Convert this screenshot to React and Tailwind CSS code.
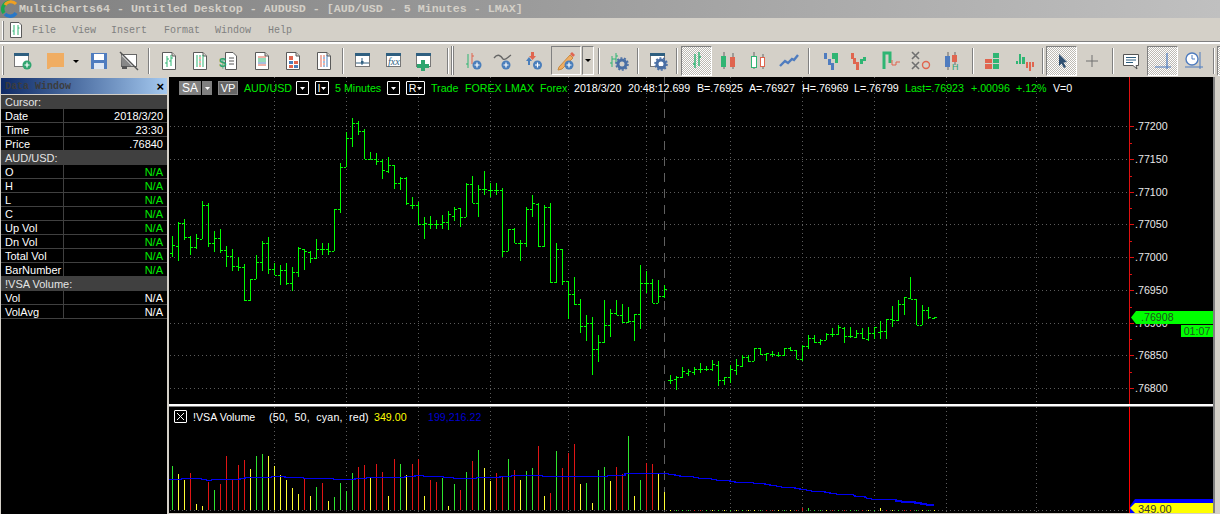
import React from "react";

const seg1 = [[408,470,460,436],[366,482,438,368],[358,420,368,412],[408,464,412,442],[402,448,442,415],[304,418,418,316],[310,442,316,428],[394,456,430,415],[388,460,415,450],[438,500,450,469],[448,512,469,498],[470,512,498,502],[492,602,502,601],[538,602,601,538],[466,538,538,487],[424,512,487,430],[412,522,430,506],[490,526,506,526],[496,554,526,511],[488,556,511,550],[502,572,550,516],[442,532,516,445],[446,510,448,454],[454,488,456,475],[418,476,475,448],[430,464,448,448],[430,464,448,452],[326,454,452,327],[188,338,327,202],[96,202,202,115],[54,140,115,68],[64,106,68,93],[88,178,93,178],[156,178,178,178],[160,196,178,184],[176,236,184,210],[172,218,212,194],[194,268,194,250],[230,270,250,234],[230,316,234,310],[292,326,314,316],[306,374,316,373],[352,416,373,370],[348,386,372,373],[360,386,373,373],[346,386,373,367],[334,390,367,343],[322,362,347,327],[324,380,325,350],[250,352,350,253]];
const seg2 = [[48,130,73,130],[76,170,130,88],[34,104,88,88],[70,112,91,91],[70,104,91,91],[85,290,91,274],[208,274,274,208],[205,250,208,250],[240,302,250,250],[142,260,250,148],[106,170,148,130],[130,262,132,257],[136,260,257,142],[130,370,142,366],[250,368,365,268],[268,374,268,364],[362,476,364,403],[352,434,403,431],[418,520,433,499],[466,544,499,490],[472,644,490,568],[526,606,568,545],[420,548,545,496],[448,532,496,460],[420,466,460,466],[432,490,466,487],[442,488,487,484],[463,542,484,463],[316,506,463,370],[334,400,370,370],[358,430,370,428],[360,430,428,409],[376,414,409,388],[646,672,661,661],[648,690,658,650],[622,654,650,634],[628,648,640,634],[622,646,636,628],[610,640,628,628],[618,634,628,628],[600,632,628,612],[604,678,616,661],[650,674,661,652],[614,668,652,628],[598,644,630,616],[586,622,618,590],[584,606,590,604],[565,604,604,565],[565,584,565,582],[578,602,582,578]];
const seg3 = [[274,290,282,282],[276,290,286,286],[264,288,286,264],[262,272,264,270],[270,298,270,296],[256,304,296,258],[226,268,258,234],[226,248,234,246],[236,256,246,240],[218,240,240,222],[204,232,222,222],[196,224,222,200],[202,248,204,228],[200,234,228,228],[210,234,230,218],[204,238,218,234],[202,242,236,218],[200,236,218,202],[182,238,216,214],[176,238,214,176],[138,200,176,180],[120,184,180,132],[112,166,132,112],[52,118,114,118],[118,196,118,194],[134,196,194,150],[142,178,150,172],[171,176,174,172]];
const bars = [
  ...seg1.map((b) => b.map((v) => 100 + v / 3)),
  ...seg2.map((b) => b.map((v) => 160 + v / 3)),
  ...seg3.map((b) => b.map((v) => 260 + v / 3)),
].map((b, i) => ({ x: 172 + i * 6, t: Math.round(b[0]), b: Math.round(b[1]), l: Math.round(b[2]), r: Math.round(b[3]) }));

const G = "#2ee62e", R = "#e01515", Y = "#ffff33";
const vol1 = [[198,G],[222,Y],[240,Y],[219,R],[312,Y],[318,Y],[246,R],[270,G],[252,R],[168,R],[240,R],[195,R],[180,R],[207,Y],[168,G],[162,G],[168,Y],[198,Y],[225,Y],[240,Y],[264,Y],[282,Y],[237,R],[288,Y],[261,G],[249,R],[303,Y],[291,G],[249,G],[273,G],[219,G],[201,R],[195,R],[234,Y],[192,R],[216,R],[288,Y],[177,R],[192,G],[225,Y],[192,R],[177,R],[288,Y],[240,R],[246,R],[234,G],[318,Y],[252,G],[270,R],[216,G],[183,R],[150,G],[204,Y],[243,Y],[219,R],[231,R],[177,G],[210,R],[240,Y],
[213,G],[204,G],[138,R],[288,Y],[279,R],[153,G],[204,R],[159,R],[132,R],[252,Y],[249,G],[309,Y],[210,G],[201,G],[243,Y],[201,R],[222,R],[108,G],[288,Y],[240,G],[189,R],[192,R],[222,Y],[276,Y]];
const tailColors = [Y,G,G,G,R,R,G,Y,G,Y,G,Y,G,Y,Y,G,R,R,Y,G,Y,R,R,G,G,G,Y,R,G,R,G,G,R,Y,G,Y,R,Y,G,R,R,G,Y,G,Y];

const blue1 = [[10,238],[50,236],[110,238],[125,241],[140,238],[225,235],[240,232],[320,229],[360,232],[415,235],[505,238],[570,235],[605,232],[720,229],[750,226],[775,229],[835,232],[865,235],[935,232],[1005,229],[1040,226]];
const blue2 = [[52,229],[248,226],[300,220],[430,223],[450,226],[465,229],[505,232],[520,235],[560,238],[575,241],[615,244],[630,247],[685,250],[720,253],[735,256],[755,259],[770,262],[810,265],[825,268],[845,271],[860,274],[900,277],[915,280],[935,283],[985,286],[990,289],[1020,292],[1025,295],[1040,298]];
const blue3 = [[33,303],[50,306],[90,309],[108,312],[125,315]];
const steps = [
  ...blue1.map(([x, y]) => [165 + x / 3, 400 + y / 3]),
  ...blue2.map(([x, y]) => [525 + x / 3, 400 + y / 3]),
  ...blue3.map(([x, y]) => [885 + x / 3, 400 + y / 3]),
];
let bluePts = "";
steps.forEach(([x, y], i) => { if (i) bluePts += ` ${x.toFixed(1)},${steps[i - 1][1].toFixed(1)}`; bluePts += ` ${x.toFixed(1)},${y.toFixed(1)}`; });
bluePts += ` 934,${steps[steps.length - 1][1].toFixed(1)}`;

const hGrid = [126, 159, 192, 224, 257, 290, 323, 355, 388];
const vGrid = [274, 346, 418, 490, 568, 646, 730, 802, 874, 946, 1036];
const labels = [".77200", ".77150", ".77100", ".77050", ".77000", ".76950", ".76900", ".76850", ".76800"];

const Ic = ({ className = "", w = 20, children }) => (
  <svg width={w} height="20" viewBox={`0 0 ${w} 20`} className={`shrink-0 ${className}`}>{children}</svg>
);
const Plus = ({ cx = 14, cy = 14, c = "#4a7ebb" }) => (
  <g><circle cx={cx} cy={cy} r="4.5" fill={c} /><path d={`M${cx - 2.5} ${cy}h5M${cx} ${cy - 2.5}v5`} stroke="#fff" strokeWidth="1.2" /></g>
);
const Gear = ({ cx = 13, cy = 13 }) => (
  <g><circle cx={cx} cy={cy} r="4" fill="none" stroke="#4a6fa5" strokeWidth="3" /><circle cx={cx} cy={cy} r="6" fill="none" stroke="#4a6fa5" strokeWidth="1.6" strokeDasharray="2 1.7" /></g>
);
const Doc = ({ className, children }) => (
  <Ic className={className}>
    <path d="M3.5 1.5H13L16.5 5V18.5H3.5Z" fill="#fff" stroke="#5a5a5a" />
    <path d="M13 1.5V5H16.5" fill="#d4d0c8" stroke="#5a5a5a" />
    {children}
  </Ic>
);
const Win = ({ children }) => (
  <g><rect x="2.5" y="2.5" width="14" height="13" fill="#fff" stroke="#777" /><rect x="2" y="2" width="15" height="3" fill="#2f5f80" />{children}</g>
);
const Sep = ({ className }) => <div className={`w-[2px] h-[26px] shrink-0 bg-[#808080] border-r border-white ${className}`} />;
const Bar2 = ({ x, t, b, l, r, c = "#2fb573" }) => (
  <path d={`M${x} ${t}V${b}M${x - 2} ${l}h2M${x} ${r}h2`} stroke={c} fill="none" />
);
const Table = ({ a, b, c }) => (
  <g>{[5, 7, 9, 11, 13, 15].map((y, i) => (
    <g key={y}><path d={`M6 ${y}h2`} stroke={a} /><path d={`M9 ${y}h2`} stroke={i % 2 ? b : a} /><path d={`M12 ${y}h2`} stroke={c} /></g>
  ))}</g>
);
const checker = "bg-[repeating-conic-gradient(#ffffff_0_25%,#bdbab3_0_50%)] bg-[length:2px_2px]";

function Toolbar() {
  return (
    <div className="h-[35px] flex items-center pl-[2px] overflow-hidden shrink-0 bg-[#d4d0c8] border-t-2 border-white">
      <div className="w-[2px] h-[29px] shrink-0 bg-white border-r border-[#808080]" />
      <Ic className="ml-[8px]"><Win /><Plus cx={15} cy={14} c="#2fa56f" /></Ic>
      <Ic className="ml-[13px]"><path d="M2 2H19V16H6L4 18H2Z" fill="#f0ad63" /></Ic>
      <svg width="8" height="20" viewBox="0 0 8 20" className="ml-[7px] shrink-0"><path d="M1 9H7L4 12Z" fill="#000" /></svg>
      <Ic className="ml-[9px]"><rect x="2" y="2" width="16" height="16" fill="#4f7cbf" /><rect x="5" y="3" width="10" height="6" fill="#fff" /><rect x="5" y="12" width="10" height="6" fill="#dfe7f3" /></Ic>
      <Ic className="ml-[10px]"><rect x="2.5" y="3.5" width="15" height="12" fill="#fff" stroke="#666" /><path d="M3 15h5v3H3Z" fill="#555" /><path d="M1 1L19 19" stroke="#555" strokeWidth="1.5" /><path d="M2 4l11 11H3Z" fill="#888" /></Ic>
      <Sep className="ml-[9px]" />
      <Doc className="ml-[9px]"><Bar2 x={8} t={5} b={16} l={12} r={8} /><Bar2 x={12} t={4} b={15} l={10} r={7} /></Doc>
      <Doc className="ml-[11px]"><Table a="#2fb573" b="#e0654f" c="#2fb573" /></Doc>
      <Ic className="ml-[9px]">
        <path d="M6.5 1.5H14L17.5 5V18.5H6.5Z" fill="#fff" stroke="#5a5a5a" />
        <path d="M10 7h5M10 10h5M10 13h5" stroke="#555" />
        <text x="0" y="16" fontSize="13" fontWeight="700" fontFamily="Liberation Sans" fill="#2fa56f">$</text>
      </Ic>
      <Doc className="ml-[13px]"><path d="M6 6h8" stroke="#e0654f" /><path d="M6 8h8M6 10h8" stroke="#2fb573" /><path d="M6 12h8" stroke="#4a7ebb" /><path d="M6 14h8" stroke="#e0654f" /></Doc>
      <Doc className="ml-[11px]"><rect x="6" y="5" width="4" height="4" fill="#e0654f" /><rect x="6" y="10" width="4" height="3" fill="#4a7ebb" /><rect x="11" y="10" width="4" height="3" fill="#e0654f" /><rect x="6" y="14" width="4" height="3" fill="#e0654f" /><rect x="11" y="14" width="4" height="3" fill="#4a7ebb" /></Doc>
      <Doc className="ml-[11px]"><Table a="#e0654f" b="#4a7ebb" c="#4a7ebb" /></Doc>
      <Sep className="ml-[8px]" />
      <Ic className="ml-[9px]"><Win /><path d="M3 12h13M9 7v7" stroke="#2f5f80" /><rect x="8" y="10" width="2.5" height="2.5" fill="#2f5f80" /></Ic>
      <Ic className="ml-[11px]"><Win /><text x="4" y="14" fontSize="10" fontStyle="italic" fontFamily="Liberation Serif" fill="#2f5f80">fxx</text></Ic>
      <Ic className="ml-[10px]"><Win /><path d="M3 13h4v-4h4v4h4v4h-4v3H7v-3H3Z" fill="#2fa56f" /></Ic>
      <Sep className="ml-[13px]" />
      <div className="ml-[2px] w-[3px] h-[29px] shrink-0 bg-white border-x border-[#808080]" />
      <Ic className="ml-[9px]"><path d="M5 3V17M3 13h2" stroke="#2fb573" fill="none" /><path d="M9 2V13M9 5h2" stroke="#e0654f" fill="none" /><Plus /></Ic>
      <Ic className="ml-[10px]"><path d="M1 7C5 2 8 5 10 8C12 10 15 6 18 4" stroke="#666" strokeWidth="1.4" fill="none" /><Plus cx={13} /></Ic>
      <Ic className="ml-[10px]"><path d="M3 10L6 6L9 10H7V14H5V10Z" fill="#4a7ebb" /><path d="M8 1h3v4h2L9.5 9L6 5h2Z" fill="#e0654f" /><Plus cx={14.5} /></Ic>
      <div className="ml-[8px] w-[30px] h-[29px] shrink-0 flex items-center justify-center border border-t-[#808080] border-l-[#808080] border-r-white border-b-white">
        <Ic><path d="M3 16L14 4L17 7L6 18L2 19Z" fill="#f0ad63" stroke="#c98a3f" /><path d="M14 3L16 1L19 4L17 6Z" fill="#e0654f" /><Plus cx={13} cy={14} /></Ic>
      </div>
      <div className="ml-[1px] w-[12px] h-[29px] shrink-0 flex items-center justify-center border border-t-[#808080] border-l-[#808080] border-r-white border-b-white">
        <svg width="6" height="4"><path d="M0 0H6L3 3Z" fill="#000" /></svg>
      </div>
      <Sep className="ml-[4px]" />
      <Ic className="ml-[9px]"><Bar2 x={3} t={5} b={16} l={12} r={8} /><Bar2 x={7} t={2} b={12} l={8} r={5} /><Gear cx={13} cy={13} /></Ic>
      <Sep className="ml-[8px]" />
      <Ic className="ml-[9px]"><Win /><Gear cx={13} cy={13} /></Ic>
      <Sep className="ml-[8px]" />
      <div className={`ml-[3px] w-[31px] h-[30px] shrink-0 flex items-center justify-center border border-t-[#808080] border-l-[#808080] border-r-white border-b-white ${checker}`}>
        <Ic><path d="M8 3V17M6 13h2" stroke="#2fb573" strokeWidth="1.4" fill="none" /><path d="M12 1V15M12 6h2" stroke="#2fb573" strokeWidth="1.4" fill="none" /></Ic>
      </div>
      <Ic className="ml-[6px]"><path d="M6 1V18M15 2V18" stroke="#666" /><rect x="3" y="5" width="5" height="11" fill="#2fb573" /><rect x="12" y="6" width="5" height="10" fill="#e0654f" /></Ic>
      <Ic className="ml-[10px]"><path d="M6 1V18M15 3V18" stroke="#666" /><rect x="3.5" y="5.5" width="5" height="11" fill="#fff" stroke="#2fb573" /><rect x="12.5" y="6.5" width="4" height="9" fill="#fff" stroke="#e0654f" /></Ic>
      <Ic className="ml-[11px]"><path d="M1 15L6 10L9 12L13 8L15 9L19 4" stroke="#4f7cbf" strokeWidth="2.4" fill="none" /></Ic>
      <Sep className="ml-[9px]" />
      <Ic className="ml-[10px]"><path d="M4 2h3v6H4ZM8 8h3v6H8ZM11 12h3v7h-3Z" fill="#4f7cbf" /><path d="M12 2h3v6h-3ZM15 2h3v10h-3Z" fill="#2fb573" /></Ic>
      <Ic className="ml-[8px]"><path d="M3 2h3v6H3ZM5 7h3v6H5ZM8 11h3v8H8Z" fill="#e0654f" /><path d="M12 8h3v5h-3ZM15 6h3v4h-3Z" fill="#2fb573" /></Ic>
      <Ic className="ml-[13px]"><path d="M3 18V2H9V12" stroke="#2fb573" strokeWidth="3" fill="none" /><path d="M11 9V14H15V11H19" stroke="#e0654f" fill="none" /></Ic>
      <Ic className="ml-[10px]"><path d="M1 1L8 8M8 1L1 8M1 11L8 18M8 11L1 18" stroke="#707070" strokeWidth="1.6" /><circle cx="15" cy="14" r="3.5" fill="none" stroke="#e0654f" strokeWidth="1.4" /></Ic>
      <Ic className="ml-[11px]"><path d="M6 1V19M13 1V14" stroke="#666" /><rect x="3" y="5" width="5" height="11" fill="#4f7cbf" /><rect x="10" y="4" width="5" height="7" fill="#e0654f" /><text x="10" y="19" fontSize="9" fontFamily="Liberation Sans" fill="#2fa56f">H</text></Ic>
      <Sep className="ml-[10px]" />
      <Ic className="ml-[8px]"><path d="M3 8h7v4H3ZM3 13h7v5H3Z" fill="#e0654f" /><path d="M11 2h6v5h-6ZM11 8h6v4h-6ZM11 13h6v5h-6Z" fill="#2fb573" /></Ic>
      <Ic className="ml-[12px]"><rect x="2" y="10" width="2" height="3" fill="#2fb573" /><rect x="5" y="3" width="2" height="10" fill="#2fb573" /><rect x="8" y="6" width="3" height="7" fill="#2fb573" /><rect x="12" y="11" width="2" height="6" fill="#e0654f" /><rect x="15" y="11" width="2" height="9" fill="#e0654f" /><rect x="18" y="11" width="2" height="5" fill="#e0654f" /></Ic>
      <Sep className="ml-[8px]" />
      <div className={`ml-[2px] w-[31px] h-[30px] shrink-0 flex items-center justify-center border border-t-[#808080] border-l-[#808080] border-r-white border-b-white ${checker}`}>
        <Ic><path d="M7 3L15 11L11.5 11.5L14 16L12 17L9.5 12.5L7 15Z" fill="#2f4f70" /></Ic>
      </div>
      <Ic className="ml-[5px]"><path d="M10 4V16M4 10H16" stroke="#707070" /></Ic>
      <Sep className="ml-[10px]" />
      <Ic className="ml-[7px]"><path d="M2.5 3.5H17.5V14.5H15L16 18L12 14.5H2.5Z" fill="#fff" stroke="#555" /><path d="M5 6.5h10M5 9h10M5 11.5h7" stroke="#2f5f80" /></Ic>
      <div className={`ml-[6px] w-[31px] h-[30px] shrink-0 flex items-center justify-center border border-t-[#808080] border-l-[#808080] border-r-white border-b-white ${checker}`}>
        <Ic><path d="M14 2V18M2 16H18" stroke="#4f7cbf" strokeWidth="1.2" /></Ic>
      </div>
      <Ic className="ml-[6px]"><circle cx="8" cy="8" r="6" fill="#fff" stroke="#4f7cbf" strokeWidth="1.4" /><path d="M8 4V8H11" stroke="#4f7cbf" fill="none" /><path d="M16 1V18M1 16H19" stroke="#4f7cbf" /></Ic>
      <Sep className="ml-[9px]" />
      <div className={`ml-[2px] w-[31px] h-[30px] shrink-0 border border-t-[#808080] border-l-[#808080] border-r-white border-b-white ${checker}`} />
    </div>
  );
}

const DataHead = ({ children }) => (
  <div className="h-[14px] bg-[#404040] text-[#e4e4e4] pl-[4px] leading-[15px] border-b border-[#404040]">{children}</div>
);
const DataRow = ({ k, v, green }) => (
  <div className="h-[14px] flex border-b border-[#404040] leading-[15px]">
    <div className="w-[63px] pl-[4px] border-r border-[#404040] text-white whitespace-nowrap">{k}</div>
    <div className={`flex-1 text-right pr-[4px] ${green ? "text-[#00ee00]" : "text-white"}`}>{v}</div>
  </div>
);

function DataWindow() {
  return (
    <div className="w-[167px] shrink-0 flex flex-col pl-[1px] bg-[#d4d0c8]">
      <div className="h-[16px] mt-[1px] flex items-center justify-between pl-[4px] pr-[3px] bg-gradient-to-r from-[#0f2a66] to-[#a6caf0]">
        <span className="font-['Liberation_Mono'] text-[10px] font-bold text-[#3c3c3c]">Data Window</span>
        <span className="text-black font-bold text-[13px] leading-none">×</span>
      </div>
      <div className="flex-1 mt-[1px] bg-black text-[11px]">
        <DataHead>Cursor:</DataHead>
        <DataRow k="Date" v="2018/3/20" />
        <DataRow k="Time" v="23:30" />
        <DataRow k="Price" v=".76840" />
        <DataHead>AUD/USD:</DataHead>
        <DataRow k="O" v="N/A" green />
        <DataRow k="H" v="N/A" green />
        <DataRow k="L" v="N/A" green />
        <DataRow k="C" v="N/A" green />
        <DataRow k="Up Vol" v="N/A" green />
        <DataRow k="Dn Vol" v="N/A" green />
        <DataRow k="Total Vol" v="N/A" green />
        <DataRow k="BarNumber" v="N/A" green />
        <DataHead>!VSA Volume:</DataHead>
        <DataRow k="Vol" v="N/A" />
        <DataRow k="VolAvg" v="N/A" />
      </div>
    </div>
  );
}

const Drop = ({ label = "", className = "" }) => (
  <div className={`h-[14px] shrink-0 flex items-center justify-center gap-[1px] border border-white rounded-[1px] text-white leading-none ${className}`}>
    {label}
    <svg width="5" height="3"><path d="M0 0H5L2.5 3Z" fill="#fff" /></svg>
  </div>
);

function ChartHeader() {
  const T = "shrink-0 whitespace-nowrap";
  return (
    <div className="absolute left-0 top-[4px] flex items-center text-[10.67px] h-[14px] pl-[10px] text-[#00ee00]">
      <div className="w-[22px] h-[14px] shrink-0 bg-[#808080] text-white text-center leading-[14px] text-[12px]">SA</div>
      <div className="ml-[1px] w-[10px] h-[14px] shrink-0 bg-[#808080] flex items-center justify-center"><svg width="5" height="3"><path d="M0 0H5L2.5 3Z" fill="#fff" /></svg></div>
      <div className="ml-[6px] w-[20px] h-[14px] shrink-0 bg-[#666] text-white text-center leading-[13px] text-[11px] border border-[#888]">VP</div>
      <span className={`ml-[6px] w-[52px] ${T}`}>AUD/USD</span>
      <Drop className="w-[13px]" />
      <Drop className="ml-[6px] w-[14px]" label="I" />
      <span className={`ml-[6px] w-[52px] ${T}`}>5 Minutes</span>
      <Drop className="w-[13px]" />
      <Drop className="ml-[6px] w-[19px]" label="R" />
      <span className={`ml-[6px] w-[34px] ${T}`}>Trade</span>
      <span className={`w-[40px] ${T}`}>FOREX</span>
      <span className={`w-[35px] ${T}`}>LMAX</span>
      <span className={`w-[34px] ${T}`}>Forex</span>
      <span className={`w-[54px] text-white ${T}`}>2018/3/20</span>
      <span className={`w-[69px] text-white ${T}`}>20:48:12.699</span>
      <span className={`w-[52px] text-white ${T}`}>B=.76925</span>
      <span className={`w-[53px] text-white ${T}`}>A=.76927</span>
      <span className={`w-[52px] text-white ${T}`}>H=.76969</span>
      <span className={`w-[51px] text-white ${T}`}>L=.76799</span>
      <span className={`w-[66px] ${T}`}>Last=.76923</span>
      <span className={`w-[45px] ${T}`}>+.00096</span>
      <span className={`w-[37px] ${T}`}>+.12%</span>
      <span className={`text-white ${T}`}>V=0</span>
    </div>
  );
}

function PricePane() {
  return (
    <div className="relative h-[327px] shrink-0 bg-black overflow-hidden">
      <svg width="1044" height="327" viewBox="169 77 1044 327" className="block" shapeRendering="crispEdges">
        {hGrid.map((y) => <line key={y} x1="170" x2="1129" y1={y + 0.5} y2={y + 0.5} stroke="#5c5c5c" strokeDasharray="1 3" />)}
        {vGrid.map((x) => <line key={x} x1={x + 0.5} x2={x + 0.5} y1="77" y2="404" stroke="#5c5c5c" strokeDasharray="1 3" />)}
        <line x1="664.5" x2="664.5" y1="77" y2="404" stroke="#606060" strokeDasharray="9 7" />
        {bars.map((b) => (
          <path key={b.x} d={`M${b.x + 0.5} ${b.t}V${b.b}M${b.x - 2} ${b.l + 0.5}H${b.x}M${b.x + 1} ${b.r + 0.5}H${b.x + 3}`} stroke="#00ff00" fill="none" />
        ))}
        <line x1="1129.5" x2="1129.5" y1="77" y2="404" stroke="#e01010" />
        {hGrid.map((y) => <line key={y} x1="1129" x2="1134" y1={y + 0.5} y2={y + 0.5} stroke="#e01010" />)}
        {hGrid.slice(0, -1).map((y, i) => <line key={y} x1="1129" x2="1132" y1={Math.round((y + hGrid[i + 1]) / 2) + 0.5} y2={Math.round((y + hGrid[i + 1]) / 2) + 0.5} stroke="#e01010" />)}
      </svg>
      <ChartHeader />
      {labels.map((t, i) => (
        <span key={t} className={`absolute left-[966px] text-[10.67px] leading-[13px] text-[#e8e8e8] ${["top-[43px]","top-[76px]","top-[109px]","top-[141px]","top-[174px]","top-[207px]","top-[240px]","top-[272px]","top-[305px]"][i]}`}>{t}</span>
      ))}
      <div className="absolute left-[962px] top-[234px] w-[82px] h-[13px] bg-[#00ff00] pl-[10px] text-[10.67px] leading-[13px] text-[#205020] [clip-path:polygon(0_50%,5px_0,100%_0,100%_100%,5px_100%)]">.76908</div>
      <div className="absolute right-0 top-[248px] w-[32px] h-[12px] bg-[#00ff00] text-center text-[10.67px] leading-[12px] text-[#205020]">01:07</div>
    </div>
  );
}

function VolumePane() {
  return (
    <div className="relative flex-1 bg-black overflow-hidden">
      <svg width="1044" height="106" viewBox="169 407 1044 106" className="block" shapeRendering="crispEdges">
        <line x1="170" x2="1129" y1="510.5" y2="510.5" stroke="#5c5c5c" strokeDasharray="1 3" />
        {vGrid.map((x) => <line key={x} x1={x + 0.5} x2={x + 0.5} y1="407" y2="513" stroke="#5c5c5c" strokeDasharray="1 3" />)}
        <line x1="664.5" x2="664.5" y1="407" y2="513" stroke="#606060" strokeDasharray="9 7" />
        {vol1.map(([z, c], i) => {
          const x = 172 + i * 6;
          return <line key={x} x1={x + 0.5} x2={x + 0.5} y1={Math.round(400 + z / 3)} y2="510" stroke={c} />;
        })}
        {tailColors.map((c, i) => {
          const x = 670 + i * 6;
          const tall = x === 802 || x === 808 || x === 880;
          return <line key={x} x1={x + 0.5} x2={x + 0.5} y1={tall ? 508 : 510} y2="511" stroke={c} />;
        })}
        <polyline points={bluePts} fill="none" stroke="#0000f0" strokeWidth="1.2" />
        <line x1="1129.5" x2="1129.5" y1="407" y2="513" stroke="#ff0000" />
      </svg>
      <div className="absolute left-[5px] top-[3px] w-[13px] h-[13px] border border-white rounded-[1px] flex items-center justify-center">
        <svg width="7" height="7"><path d="M0 0L7 7M7 0L0 7" stroke="#fff" /></svg>
      </div>
      <div className="absolute left-[24px] top-[4px] h-[13px] flex text-[10.67px] leading-[13px]">
        <span className="w-[76px] shrink-0 text-white whitespace-nowrap">!VSA Volume</span>
        <span className="w-[105px] shrink-0 text-white whitespace-nowrap tracking-[0.2px]">(50,&nbsp; 50,&nbsp; cyan,&nbsp; red)</span>
        <span className="w-[54px] shrink-0 text-[#ffff00]">349.00</span>
        <span className="shrink-0 text-[#0000d0]">199,216.22</span>
      </div>
      <div className="absolute left-[961px] right-0 top-[92px] h-[14px] bg-[#0000ff] [clip-path:polygon(0_50%,5px_0,100%_0,100%_100%,0_100%)]" />
      <div className="absolute left-[961px] right-0 top-[96px] h-[10px] bg-[#ffff00] pl-[8px] text-[11px] leading-[12px] text-[#333] [clip-path:polygon(0_50%,5px_0,100%_0,100%_100%,5px_100%)]">349.00</div>
    </div>
  );
}

export default function App() {
  return (
    <div className="w-[1220px] h-[514px] overflow-hidden flex flex-col bg-[#d4d0c8] font-['Liberation_Sans',Arial,sans-serif]">
      <div className="h-[18px] shrink-0 flex items-center bg-gradient-to-r from-[#808080] to-[#c0c0c0]">
        <svg width="18" height="18" viewBox="0 0 18 18" className="ml-[1px] shrink-0">
          <path d="M9 2A7 7 0 0 0 3 13" fill="none" stroke="#18a850" strokeWidth="3.5" />
          <path d="M4 5A7 7 0 0 1 15 4" fill="none" stroke="#f0a020" strokeWidth="3" />
          <path d="M4 14A7 7 0 0 0 15 13" fill="none" stroke="#2878c8" strokeWidth="3.5" />
        </svg>
        <span className="pt-[2px] font-['Liberation_Mono'] font-bold text-[11.67px] text-[#d4d0c8] whitespace-pre">MultiCharts64 - Untitled Desktop - AUDUSD - [AUD/USD - 5 Minutes - LMAX]</span>
      </div>
      <div className="h-[24px] shrink-0 flex items-center pt-[1px] pl-[2px] border-b border-b-[#808080] font-['Liberation_Mono'] text-[10px] text-[#808080]">
        <div className="w-[2px] h-[19px] shrink-0 bg-white border-r border-[#808080]" />
        <svg width="14" height="16" viewBox="0 0 14 16" className="ml-[5px] shrink-0">
          <path d="M1.5 .5H10L12.5 3V15.5H1.5Z" fill="#fff" stroke="#5a5a5a" />
          <path d="M5 3V13M3.5 9H5M9 3V13M9 6h1.5" stroke="#2fb573" fill="none" />
        </svg>
        <span className="ml-[9px] w-[40px] shrink-0">File</span>
        <span className="w-[39px] shrink-0">View</span>
        <span className="w-[53px] shrink-0">Insert</span>
        <span className="w-[51px] shrink-0">Format</span>
        <span className="w-[53px] shrink-0">Window</span>
        <span className="shrink-0">Help</span>
      </div>
      <Toolbar />
      <div className="flex-1 flex min-h-0">
        <DataWindow />
        <div className="ml-[2px] flex-1 min-w-0 flex flex-col pb-[1px]">
          <div className="flex-1 flex min-h-0">
            <div className="w-[1044px] shrink-0 flex flex-col">
              <PricePane />
              <div className="h-[3px] shrink-0 bg-white border-b border-[#808080]" />
              <VolumePane />
            </div>
            <div className="w-[2px] shrink-0 bg-[#808080]" />
          </div>
        </div>
      </div>
    </div>
  );
}
